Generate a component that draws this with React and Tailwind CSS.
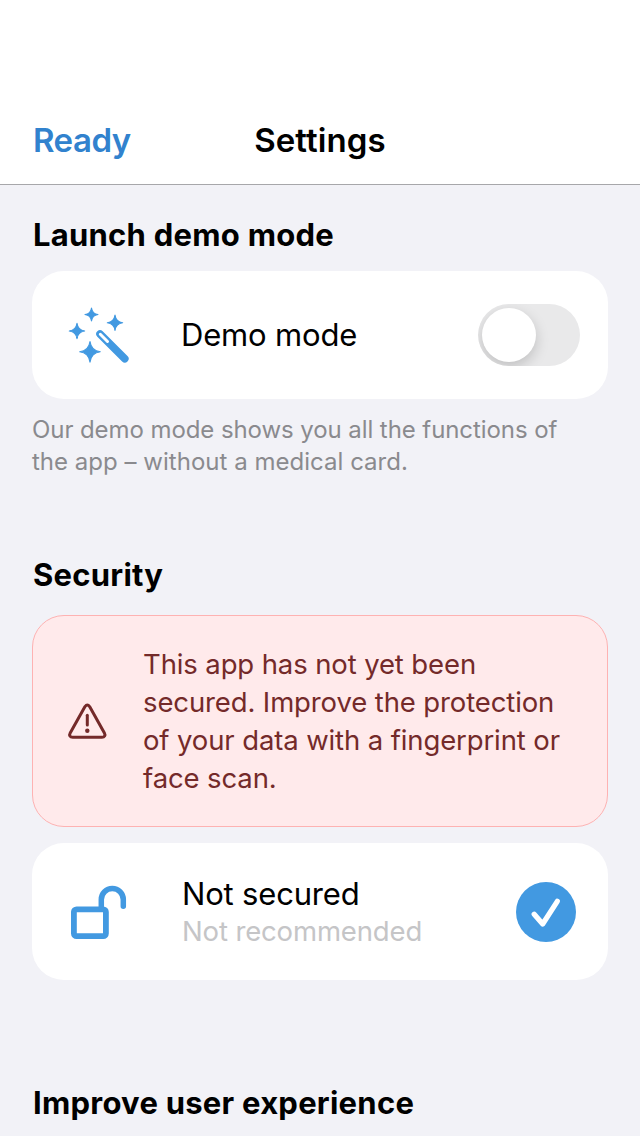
const heading = "pl-px whitespace-nowrap text-[31px] leading-10 font-bold tracking-[0.25px] text-black";

function Star({ x, y, r }) {
  const n = r * 0.12;
  return (
    <path
      d={`M${x} ${y - r}Q${x + n} ${y - n} ${x + r} ${y}Q${x + n} ${y + n} ${x} ${y + r}Q${x - n} ${y + n} ${x - r} ${y}Q${x - n} ${y - n} ${x} ${y - r}Z`}
      stroke="#4299e1"
      strokeWidth="1.1"
      strokeLinejoin="round"
    />
  );
}

function WandIcon() {
  return (
    <svg className="size-16 shrink-0" viewBox="0 0 64 64" fill="#4299e1">
      <Star x={25.5} y={11.5} r={6.5} />
      <Star x={49} y={19.8} r={7.7} />
      <Star x={11} y={28} r={7.7} />
      <Star x={24} y={48.8} r={10.3} />
      <path d="M34 31L58.800 55.800" stroke="#4299e1" strokeWidth="7.600" strokeLinecap="round" />
      <path d="M34.300 31.300L41.500 38.500" stroke="white" strokeWidth="3" strokeLinecap="round" />
    </svg>
  );
}

function LockIcon() {
  return (
    <svg className="size-16 shrink-0" viewBox="0 0 64 64" fill="none" stroke="#4299e1" strokeWidth="5.500">
      <rect x="5.900" y="29.300" width="32" height="26.900" rx="2.700" strokeWidth="5.800" />
      <path d="M33.300 29V19.500a11 11 0 0 1 22 0V26.300" strokeLinecap="round" />
    </svg>
  );
}

function WarningIcon() {
  return (
    <svg className="mt-px h-10 w-11 shrink-0" viewBox="0 0 44 40" fill="none" stroke="#742a2a" strokeWidth="3" strokeLinecap="round" strokeLinejoin="round">
      <path d="M19 4.600L4.200 30.900C2.900 33.200 4 35.200 6.700 35.200H35.900C38.600 35.200 39.700 33.200 38.400 30.900L23.600 4.600Q21.300 1.600 19 4.600Z" />
      <path d="M21.300 13.200V23" />
      <circle cx="21.300" cy="28.700" r="2.200" fill="#742a2a" stroke="none" />
    </svg>
  );
}

function Toggle() {
  return (
    <button type="button" role="switch" aria-checked="false" aria-label="Demo mode" className="ml-auto flex h-[62px] w-[102px] items-center overflow-hidden rounded-full bg-[#e9e9ea] px-1">
      <span className="size-[54px] rounded-full bg-white shadow-[0_5px_14px_rgba(0,0,0,0.18)]" />
    </button>
  );
}

export default function App() {
  return (
    <div className="h-[1136px] w-[640px] overflow-hidden bg-[#f2f2f7] font-['Inter',sans-serif] text-black">
      <header className="grid h-[185px] grid-cols-3 items-end border-b border-[#a7a7aa] bg-white px-8 pb-6">
        <span className="pl-px text-[33px] leading-10 font-semibold tracking-[-0.5px] text-[#3182ce]">Ready</span>
        <h1 className="text-center text-[33px] leading-10 font-semibold tracking-[0.1px]">Settings</h1>
      </header>
      <main className="px-8 pt-[30px]">
        <section>
          <h2 className={heading}>Launch demo mode</h2>
          <div className="mt-4 flex h-32 items-center rounded-[32px] bg-white pr-7 pl-[34px]">
            <WandIcon />
            <span className="-mt-px ml-[51px] text-[31px] leading-10 tracking-[-0.18px]">Demo mode</span>
            <Toggle />
          </div>
          <p className="mt-[15px] text-2xl leading-8 tracking-[-0.08px] whitespace-nowrap text-[#8a8a8e]">
            Our demo mode shows you all the functions of<br />
            <span className="tracking-[0.02px]">the app – without a medical card.</span>
          </p>
        </section>
        <section className="mt-[77px]">
          <h2 className={heading}>Security</h2>
          <div className="mt-5 flex h-[212px] items-center rounded-[32px] border border-[#feb2b2] bg-[#ffeaeb] pl-[33px]">
            <WarningIcon />
            <p className="-mt-px ml-[33px] text-[27.5px] leading-[38px] tracking-[-0.12px] whitespace-nowrap text-[#742a2a]">
              This app has not yet been<br />secured. Improve the protection<br />of your data with a fingerprint or<br />face scan.
            </p>
          </div>
          <div className="mt-4 flex h-[137px] items-center rounded-[32px] bg-white pr-8 pl-9">
            <LockIcon />
            <div className="mt-px ml-[50px] whitespace-nowrap">
              <p className="text-[31px] leading-[38px] tracking-[-0.18px]">Not secured</p>
              <p className="text-[27.5px] leading-9 tracking-[-0.14px] text-[#c5c5c7]">Not recommended</p>
            </div>
            <svg className="ml-auto size-[60px]" viewBox="0 0 60 60" fill="none">
              <circle cx="30" cy="30" r="30" fill="#4299e1" />
              <path d="M18.200 32.200L26.700 42L41.300 19.300" stroke="white" strokeWidth="5.200" strokeLinecap="round" strokeLinejoin="round" />
            </svg>
          </div>
        </section>
        <h2 className={`${heading} mt-[103px]`}>Improve user experience</h2>
      </main>
    </div>
  );
}
